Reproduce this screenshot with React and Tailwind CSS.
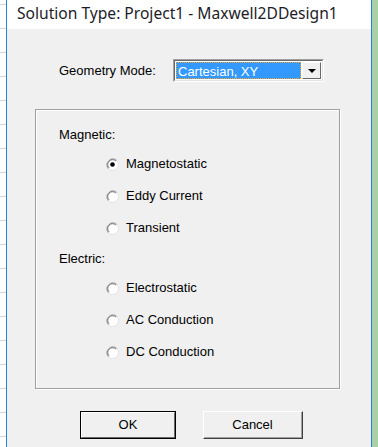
import React from "react";

const ticks = Array.from({ length: 19 });

const Radio = ({ checked }) => (
    <svg width="13" height="13" viewBox="0 0 13 13" className="shrink-0">
        <circle cx="6.5" cy="6.5" r="6" fill="#fff" stroke="#e2e2e2" strokeWidth="1" />
        <path d="M2.3 10.7 A6 6 0 0 1 10.7 2.3" fill="none" stroke="#a0a0a0" strokeWidth="1" />
        <path d="M3.1 9.9 A4.8 4.8 0 0 1 9.9 3.1" fill="none" stroke="#6e6e6e" strokeWidth="1" />
        {checked && <circle cx="6.5" cy="6.5" r="2.3" fill="#000" />}
    </svg>
);

const Option = ({ label, checked, mt }) => (
    <div className={`flex items-center h-[20px] pl-[70px] ${mt}`}>
        <Radio checked={checked} />
        <span className="ml-[7px]">{label}</span>
    </div>
);

export default function App() {
    return (
        <div className="w-[378px] h-[447px] flex overflow-hidden bg-white font-['Liberation_Sans',Arial,sans-serif] text-[13px] text-black">
            {/* spreadsheet strip behind */}
            <div className="w-[6px] flex flex-col pt-[4px]">
                {ticks.map((_, i) => (
                    <div key={i} className="h-[24px] shrink-0 border-t border-[#d4d4dc]" />
                ))}
            </div>
            <div className="w-px bg-[#2b7fd6]" />

            {/* dialog */}
            <div className="flex-1 flex flex-col">
                <div className="h-[29px] bg-white pl-[10px] pb-[1px] flex items-center font-['Noto_Sans',sans-serif] text-[15.6px] text-[#1c1c28] whitespace-nowrap">
                    Solution Type: Project1 - Maxwell2DDesign1
                </div>

                <div className="flex-1 bg-[#f0f0f0] flex flex-col">
                    {/* geometry mode */}
                    <div className="flex items-center mt-[30px] h-[23px]">
                        <span className="ml-[52px] w-[114px]">Geometry Mode:</span>
                        <div className="w-[151px] h-[23px] flex border-t border-l border-[#a0a0a0] border-r border-b border-r-white border-b-white">
                            <div className="flex-1 flex border-t border-l border-[#696969] border-r border-b border-r-[#e3e3e3] border-b-[#e3e3e3] bg-white p-px">
                                <div className="flex-1 bg-[#3399ff] border border-dotted border-[#f5a623] text-white pl-[1px] leading-[17px]">
                                    Cartesian, XY
                                </div>
                                <div className="w-[19px] ml-px flex items-center justify-center bg-[#f0f0f0] border-t border-l border-white border-r border-b border-r-[#696969] border-b-[#696969]">
                                    <div className="w-0 h-0 border-l-[4px] border-r-[4px] border-t-[4px] border-l-transparent border-r-transparent border-t-black" />
                                </div>
                            </div>
                        </div>
                    </div>

                    {/* solution types */}
                    <div className="ml-[28px] mt-[27px] w-[305px] h-[280px] border border-[#a0a0a0] shadow-[inset_1px_1px_0_#fff,1px_1px_0_#fff] flex flex-col">
                        <div className="h-[20px] flex items-center pl-[23px] mt-[15px]">Magnetic:</div>
                        <Option label="Magnetostatic" checked mt="mt-[9px]" />
                        <Option label="Eddy Current" mt="mt-[12px]" />
                        <Option label="Transient" mt="mt-[12px]" />
                        <div className="h-[20px] flex items-center pl-[23px] mt-[11px]">Electric:</div>
                        <Option label="Electrostatic" mt="mt-[9px]" />
                        <Option label="AC Conduction" mt="mt-[12px]" />
                        <Option label="DC Conduction" mt="mt-[12px]" />
                    </div>

                    {/* buttons */}
                    <div className="flex mt-[22px] ml-[73px] gap-[27px]">
                        <button className="w-[96px] h-[28px] border border-black bg-[#f0f0f0] p-0">
                            <div className="w-full h-full flex items-center justify-center border-t border-l border-white border-r border-b border-r-[#696969] border-b-[#696969]">
                                OK
                            </div>
                        </button>
                        <button className="w-[100px] h-[28px] bg-[#f0f0f0] p-0 border-t border-l border-white border-r border-b border-r-[#404040] border-b-[#404040]">
                            <div className="w-full h-full flex items-center justify-center border-r border-b border-[#a0a0a0]">
                                Cancel
                            </div>
                        </button>
                    </div>
                </div>
            </div>

            <div className="w-px bg-[#2b7fd6]" />
            <div className="w-[6px] bg-[#a9d1a9]" />
        </div>
    );
}
